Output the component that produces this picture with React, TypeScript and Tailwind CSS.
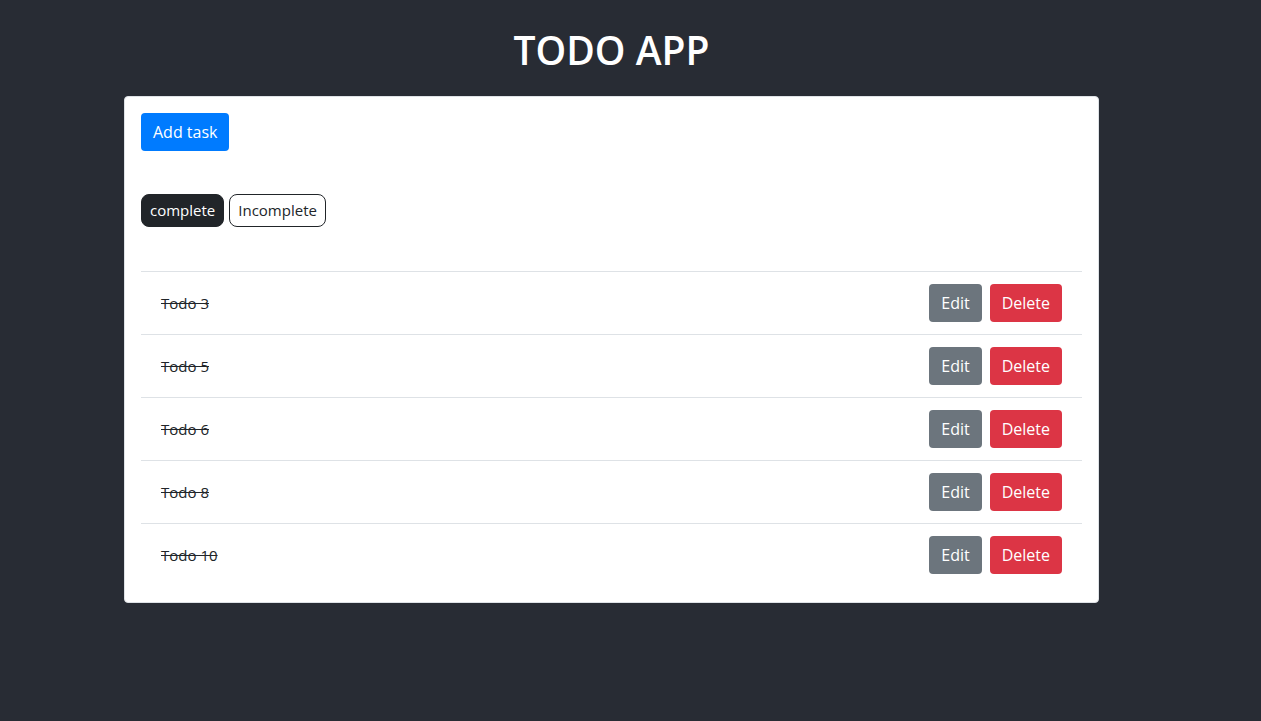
import React, { useState } from 'react';

interface Todo {
  id: number;
  title: string;
  completed: boolean;
}

const initialTodos: Todo[] = [
  { id: 3, title: 'Todo 3', completed: true },
  { id: 5, title: 'Todo 5', completed: true },
  { id: 6, title: 'Todo 6', completed: true },
  { id: 8, title: 'Todo 8', completed: true },
  { id: 10, title: 'Todo 10', completed: true },
];

const App = () => {
  const [filter, setFilter] = useState<'complete' | 'incomplete'>('complete');
  const [todos] = useState<Todo[]>(initialTodos);

  const visible = todos.filter((t) => (filter === 'complete' ? t.completed : !t.completed));

  return (
    <div
      className="min-h-[721px] bg-[#282c34] text-[#212529] pt-[26px]"
      style={{ fontFamily: '"Open Sans", "Noto Sans", sans-serif' }}
    >
      <div className="ml-[124px] w-[975px]">
        <h1 className="text-center text-white text-[39px] font-semibold leading-[48px] mb-[22px]">
          TODO APP
        </h1>

        <div className="bg-white border border-[#dee2e6] rounded-[4px] p-4">
          <button className="h-[38px] px-3 rounded-[4px] bg-[#007bff] text-white text-[16px]">
            Add task
          </button>

          <div className="flex gap-[5px] mt-[43px]">
            <button
              onClick={() => setFilter('complete')}
              className={`h-[33px] px-2 rounded-lg border border-[#212529] text-[15px] ${
                filter === 'complete' ? 'bg-[#212529] text-white' : 'bg-white text-[#212529]'
              }`}
            >
              complete
            </button>
            <button
              onClick={() => setFilter('incomplete')}
              className={`h-[33px] px-2 rounded-lg border border-[#212529] text-[15px] ${
                filter === 'incomplete' ? 'bg-[#212529] text-white' : 'bg-white text-[#212529]'
              }`}
            >
              Incomplete
            </button>
          </div>

          <ul className="mt-[44px]">
            {visible.map((todo) => (
              <li
                key={todo.id}
                className="flex items-center justify-between border-t border-[#dee2e6] py-3 px-5"
              >
                <span className={`text-[15px] ${todo.completed ? 'line-through' : ''}`}>
                  {todo.title}
                </span>
                <div className="flex gap-2">
                  <button className="h-[38px] px-3 rounded-[4px] bg-[#6c757d] text-white text-[16px]">
                    Edit
                  </button>
                  <button className="h-[38px] px-3 rounded-[4px] bg-[#dc3545] text-white text-[16px]">
                    Delete
                  </button>
                </div>
              </li>
            ))}
          </ul>
        </div>
      </div>
    </div>
  );
};

export default App;
